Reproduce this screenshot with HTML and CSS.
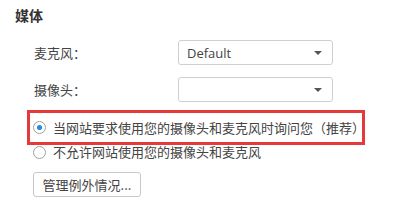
FILE: index.html
```html
<html lang="zh-CN">
<head>
    <meta charset="UTF-8">
    <title>媒体</title>
    <link rel="stylesheet" href="styles.css">
</head>
<body>
    <div class="section">
        <div class="section-title">媒体</div>
        <div class="fields">
            <div class="field">
                <span class="label">麦克风<span class="punct">：</span></span>
                <div class="select"><span class="value">Default</span><span class="caret"></span></div>
            </div>
            <div class="field">
                <span class="label">摄像头<span class="punct">：</span></span>
                <div class="select"><span class="value"></span><span class="caret"></span></div>
            </div>
        </div>
        <div class="options">
            <div class="option highlight">
                <span class="radio checked"></span>
                <span class="option-text">当网站要求使用您的摄像头和麦克风时询问您<span class="punct">（</span>推荐<span class="punct">）</span></span>
            </div>
            <div class="option">
                <span class="radio"></span>
                <span class="option-text">不允许网站使用您的摄像头和麦克风</span>
            </div>
        </div>
        <button class="button">管理例外情况...</button>
    </div>
</body>
</html>
```

FILE: styles.css
```css
body {
    margin: 0;
    background-color: #ffffff;
    font-family: "Noto Sans CJK SC", sans-serif;
    font-size: 13px;
    color: #444444;
}
.punct {
    font-family: "Noto Sans CJK TC", sans-serif;
}
.section {
    display: flex;
    flex-direction: column;
    align-items: flex-start;
}
.section-title {
    margin: 5px 0 0 15px;
    font-size: 14px;
    line-height: 20px;
    font-weight: bold;
    color: #333333;
}
.fields {
    display: flex;
    flex-direction: column;
    gap: 12px;
    margin-top: 15px;
}
.field {
    display: flex;
    align-items: center;
    height: 25px;
}
.label {
    width: 144px;
    padding-left: 34px;
    color: #444444;
}
.select {
    box-sizing: border-box;
    width: 155px;
    height: 25px;
    display: flex;
    align-items: center;
    justify-content: space-between;
    padding: 0 10px 0 8px;
    border: 1px solid #cfcfcf;
    border-radius: 3px;
    font-family: "Open Sans", sans-serif;
    color: #444444;
}
.caret {
    width: 0;
    height: 0;
    border-left: 4px solid transparent;
    border-right: 4px solid transparent;
    border-top: 4px solid #555555;
}
.options {
    display: flex;
    flex-direction: column;
    margin: 8px 0 0 27px;
}
.option {
    display: flex;
    align-items: center;
    gap: 7px;
    height: 14px;
    padding-left: 6px;
    line-height: 14px;
}
.option-text {
    white-space: nowrap;
    flex-shrink: 0;
}
.option.highlight {
    box-sizing: border-box;
    width: 338px;
    height: 35px;
    padding-left: 3px;
    border: 3px solid #e5393c;
}
.radio {
    box-sizing: border-box;
    width: 13px;
    height: 13px;
    flex-shrink: 0;
    border: 1px solid #a0a0a0;
    border-radius: 50%;
    background-color: #ffffff;
    display: flex;
    align-items: center;
    justify-content: center;
}
.radio.checked::after {
    content: "";
    width: 5px;
    height: 5px;
    border-radius: 50%;
    background-color: #1e88e5;
}
.button {
    box-sizing: border-box;
    margin: 13px 0 0 33px;
    width: 108px;
    height: 25px;
    padding: 0;
    font-family: "Noto Sans CJK SC", sans-serif;
    font-size: 13px;
    color: #444444;
    background-color: #ffffff;
    border: 1px solid #c8c8c8;
    border-radius: 3px;
}
```
